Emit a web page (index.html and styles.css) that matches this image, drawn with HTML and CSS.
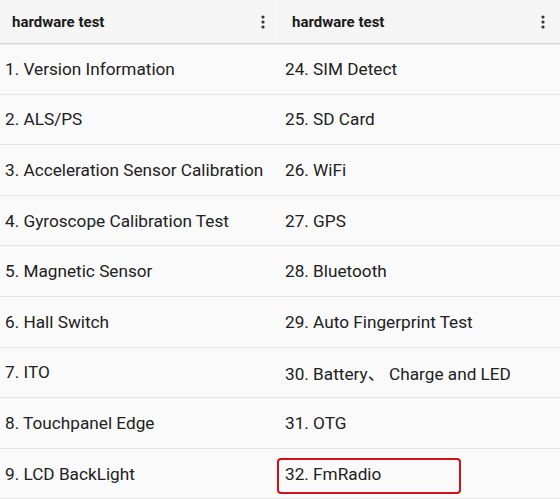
FILE: index.html
```html
<!DOCTYPE html>
<html>
<head>
<meta charset="utf-8">
<link rel="stylesheet" href="styles.css">
</head>
<body>
<div class="screen">
  <div class="panel">
    <div class="bar">
      <span class="title">hardware test</span>
      <svg class="menu" width="4" height="14" viewBox="0 0 4 14"><circle cx="2" cy="2" r="1.6"/><circle cx="2" cy="7" r="1.6"/><circle cx="2" cy="12" r="1.6"/></svg>
    </div>
    <ul class="list">
      <li class="row">1. Version Information</li>
      <li class="row">2. ALS/PS</li>
      <li class="row">3. Acceleration Sensor Calibration</li>
      <li class="row">4. Gyroscope Calibration Test</li>
      <li class="row">5. Magnetic Sensor</li>
      <li class="row">6. Hall Switch</li>
      <li class="row">7. ITO</li>
      <li class="row">8. Touchpanel Edge</li>
      <li class="row">9. LCD BackLight</li>
    </ul>
  </div>
  <div class="panel">
    <div class="bar">
      <span class="title">hardware test</span>
      <svg class="menu" width="4" height="14" viewBox="0 0 4 14"><circle cx="2" cy="2" r="1.6"/><circle cx="2" cy="7" r="1.6"/><circle cx="2" cy="12" r="1.6"/></svg>
    </div>
    <ul class="list">
      <li class="row">24. SIM Detect</li>
      <li class="row">25. SD Card</li>
      <li class="row">26. WiFi</li>
      <li class="row">27. GPS</li>
      <li class="row">28. Bluetooth</li>
      <li class="row">29. Auto Fingerprint Test</li>
      <li class="row">30. Battery、 Charge and LED</li>
      <li class="row">31. OTG</li>
      <li class="row">32. FmRadio<span class="highlight"></span></li>
    </ul>
  </div>
</div>
</body>
</html>
```
FILE: styles.css
```css
html, body {
  margin: 0;
  padding: 0;
  background: #fafafa;
}
body {
  font-family: Roboto, "Noto Sans", "Noto Sans CJK SC", sans-serif;
  color: #212121;
  overflow: hidden;
}
.screen {
  display: grid;
  grid-template-columns: 280px 280px;
  width: 560px;
  height: 499px;
  overflow: hidden;
}
.panel {
  display: flex;
  flex-direction: column;
}
.bar {
  height: 43px;
  background: #f5f5f5;
  display: flex;
  align-items: center;
  justify-content: space-between;
  padding: 0 15px 0 12px;
  border-bottom: 1px solid #d4d4d4;
  box-shadow: 0 1px 1px rgba(0,0,0,0.06);
  position: relative;
  z-index: 1;
}
.title {
  font-size: 15px;
  font-weight: 700;
  color: #1a1a1a;
}
.menu {
  fill: #333;
}
.list {
  list-style: none;
  margin: 0;
  padding: 0;
}
.row {
  box-sizing: border-box;
  height: 50.6px;
  display: flex;
  align-items: center;
  padding-left: 5px;
  font-size: 17.2px;
  border-bottom: 1px solid #e6e6e6;
  position: relative;
  white-space: nowrap;
}
.highlight {
  position: absolute;
  left: -3px;
  top: 9px;
  width: 184px;
  height: 36px;
  box-sizing: border-box;
  border: 2px solid #d0101b;
  border-radius: 4px;
}
```
